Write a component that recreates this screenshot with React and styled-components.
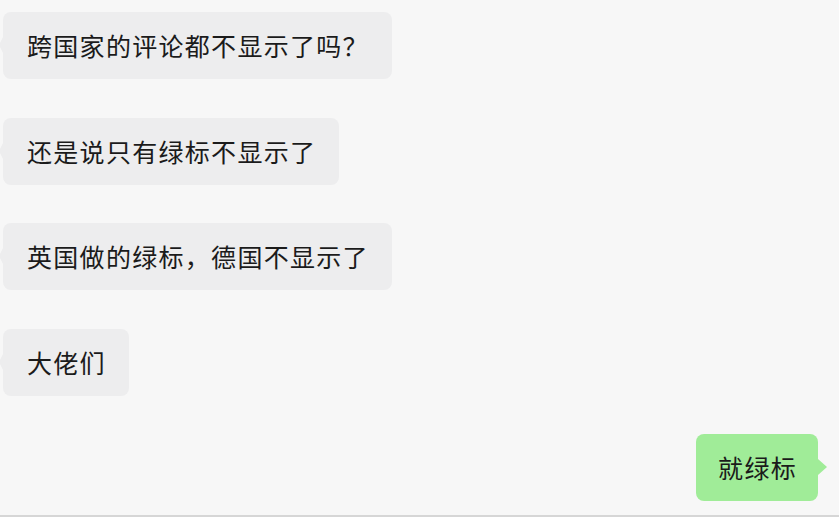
import React from "react";
import styled, { createGlobalStyle } from "styled-components";

const GlobalStyle = createGlobalStyle`
  html, body {
    margin: 0;
    padding: 0;
    background: #f7f7f7;
  }
  body {
    font-family: "Noto Sans CJK SC", "Noto Sans", sans-serif;
  }
`;

const Chat = styled.div`
  width: 839px;
  height: 517px;
  box-sizing: border-box;
  padding: 12px 21px 0 3px;
  display: flex;
  flex-direction: column;
  gap: 38.5px;
  background: #f7f7f7;
  border-bottom: 2px solid #d6d6d6;
  overflow: hidden;
`;

const Row = styled.div`
  display: flex;
  justify-content: ${(p) => (p.$mine ? "flex-end" : "flex-start")};
`;

const Bubble = styled.div`
  position: relative;
  height: 67px;
  box-sizing: border-box;
  padding: 0 ${(p) => (p.$mine ? "21px" : "23px")} 0 ${(p) => (p.$mine ? "22px" : "24px")};
  display: flex;
  align-items: center;
  border-radius: 8px;
  font-size: 25px;
  letter-spacing: 1.3px;
  line-height: 1;
  color: #1b1b1b;
  white-space: nowrap;
  background: ${(p) => (p.$mine ? "#a0ec98" : "#ededee")};

  &::before {
    content: "";
    position: absolute;
    top: 25px;
    ${(p) => (p.$mine ? "right: -9px;" : "left: -4px;")}
    border-top: 8px solid transparent;
    border-bottom: 8px solid transparent;
    ${(p) =>
      p.$mine
        ? "border-left: 9px solid #a0ec98;"
        : "border-right: 4px solid #ededee;"}
  }
`;

const messages = [
  { text: "跨国家的评论都不显示了吗？" },
  { text: "还是说只有绿标不显示了" },
  { text: "英国做的绿标，德国不显示了" },
  { text: "大佬们" },
  { text: "就绿标", mine: true },
];

const App = () => (
  <>
    <GlobalStyle />
    <Chat>
      {messages.map((m, i) => (
        <Row key={i} $mine={m.mine}>
          <Bubble $mine={m.mine}>{m.text}</Bubble>
        </Row>
      ))}
    </Chat>
  </>
);

export default App;
